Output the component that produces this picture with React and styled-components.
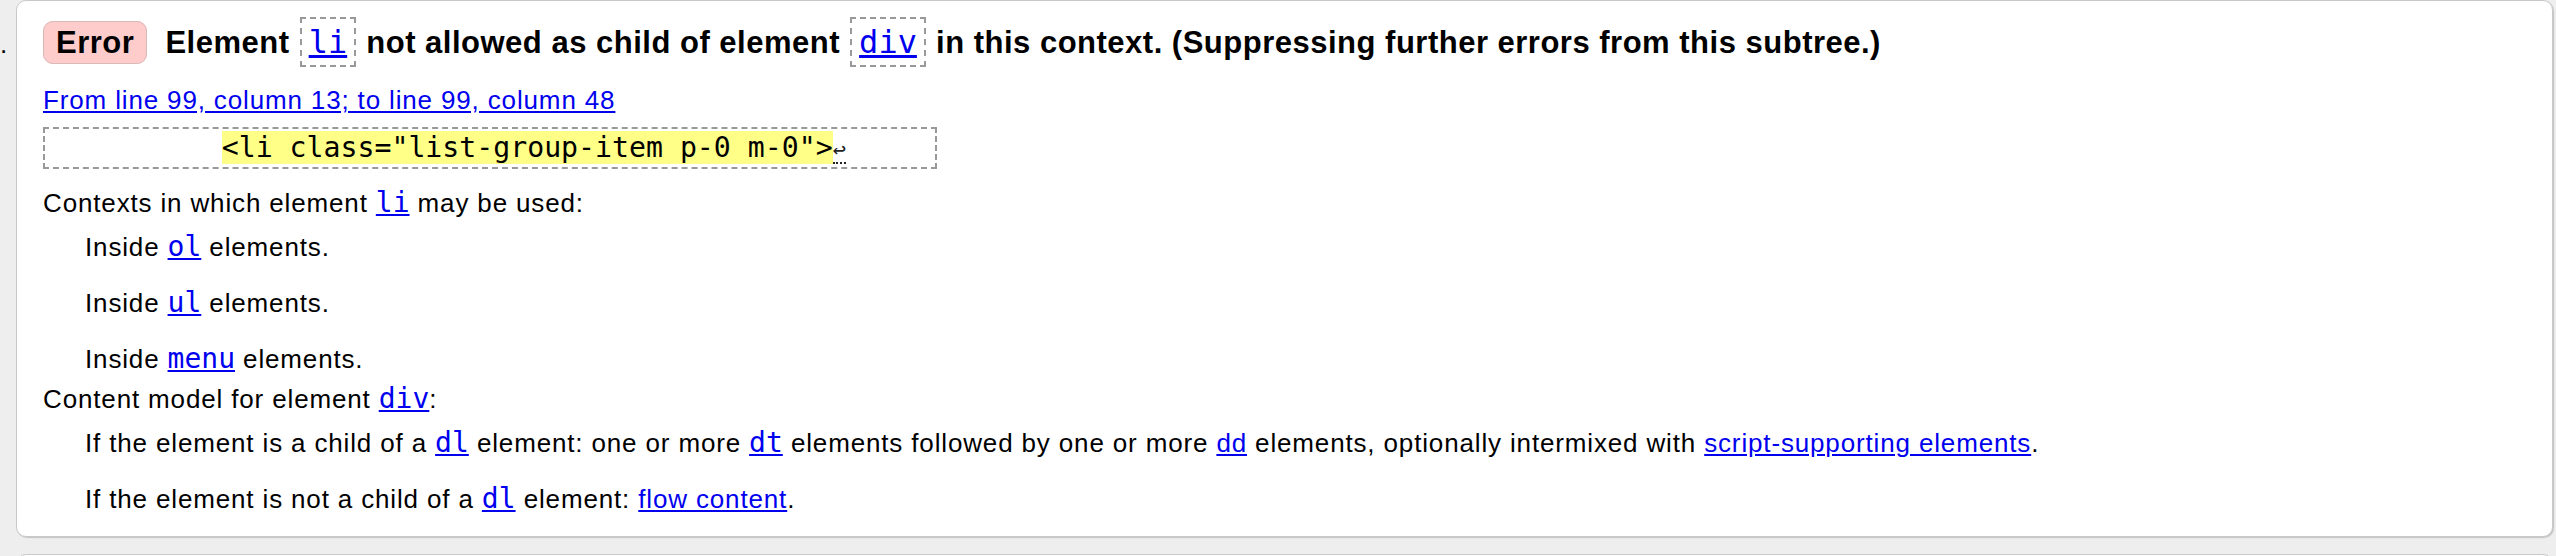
import React from 'react';
import styled, { createGlobalStyle, css } from 'styled-components';

const GlobalStyle = createGlobalStyle`
  html, body {
    margin: 0;
    padding: 0;
    overflow: hidden;
    background: #eee;
  }
  body {
    font-family: "Liberation Sans", Arial, Helvetica, sans-serif;
    font-size: 26px;
    line-height: 30px;
    letter-spacing: 0.85px;
    color: #000;
  }
`;

const List = styled.div`
  display: flex;
  flex-direction: column;
  gap: 17px;
  padding-right: 3px;
`;

const Item = styled.div`
  display: flex;
  align-items: baseline;
`;

const Marker = styled.span`
  flex: none;
  width: 16px;
  font-size: 26px;
`;

const Card = styled.div`
  flex: 1;
  min-width: 0;
  min-height: ${(p) => (p.$empty ? '160px' : 'auto')};
  background: #fff;
  border: 1px solid #c9c9c9;
  border-radius: 10px;
  box-shadow: 1px 1px 1px #c4c4c4;
  padding: 24px 26px 22px;
`;

const Message = styled.p`
  margin: 0 0 24px;
  font-size: 31px;
  line-height: 36px;
  font-weight: bold;
  letter-spacing: 0.5px;
  white-space: nowrap;
`;

const Badge = styled.strong`
  padding: 3px 12px;
  margin-right: 9px;
  background: #fcc;
  border: 1px solid #dcb9b9;
  border-radius: 10px;
`;

const Code = styled.code`
  font-family: "DejaVu Sans Mono", "Liberation Mono", monospace;
  font-weight: normal;
  font-size: ${(p) => p.$size || '28px'};
  line-height: 1;
  letter-spacing: 0;
  ${(p) =>
    p.$boxed &&
    css`
      padding: 4px 7px;
      margin: 0 1px;
      border: 2px dashed #999;
    `}
`;

const Link = styled.a`
  color: #00e;
  text-decoration: underline;
`;

const Location = styled.p`
  margin: 0;
`;

const Extract = styled.pre`
  box-sizing: border-box;
  width: 894px;
  margin: 12px 0 19px;
  padding: 2px 2px 2px 7px;
  border: 2px dashed #999;
  font-family: "DejaVu Sans Mono", "Liberation Mono", monospace;
  font-size: 28.2px;
  line-height: 34px;
  letter-spacing: 0;
  white-space: pre;
`;

const Highlight = styled.b`
  font-weight: normal;
  background: #ff8;
`;

const LineFeed = styled.span`
  font-size: 22px;
  line-height: 1;
  color: #222;
  border-bottom: 2px dotted #222;
`;

const Dl = styled.dl`
  margin: 0;
  & + & {
    margin-top: 10px;
  }
`;

const Dt = styled.dt`
  margin: 0;
`;

const Dd = styled.dd`
  margin: 14px 0 0 42px;
  & + & {
    margin-top: 26px;
  }
`;

const Tag = ({ children, size, boxed }) => (
  <Code $size={size} $boxed={boxed}>
    <Link href="#">{children}</Link>
  </Code>
);

const App = () => (
  <>
    <GlobalStyle />
    <List>
      <Item>
        <Marker>.</Marker>
        <Card>
          <Message>
            <Badge>Error</Badge> Element <Tag size="32px" boxed>li</Tag> not allowed as child of element{' '}
            <Tag size="32px" boxed>div</Tag> in this context. (Suppressing further errors from this subtree.)
          </Message>
          <Location>
            <Link href="#">From line 99, column 13; to line 99, column 48</Link>
          </Location>
          <Extract>
            {'          '}
            <Highlight>{'<li class="list-group-item p-0 m-0">'}</Highlight>
            <LineFeed title="Line break">↩</LineFeed>
          </Extract>
          <Dl>
            <Dt>
              Contexts in which element <Tag>li</Tag> may be used:
            </Dt>
            <Dd>
              Inside <Tag>ol</Tag> elements.
            </Dd>
            <Dd>
              Inside <Tag>ul</Tag> elements.
            </Dd>
            <Dd>
              Inside <Tag>menu</Tag> elements.
            </Dd>
          </Dl>
          <Dl>
            <Dt>
              Content model for element <Tag>div</Tag>:
            </Dt>
            <Dd>
              If the element is a child of a <Tag>dl</Tag> element: one or more <Tag>dt</Tag> elements followed by one or
              more <Link href="#">dd</Link> elements, optionally intermixed with{' '}
              <Link href="#">script-supporting elements</Link>.
            </Dd>
            <Dd>
              If the element is not a child of a <Tag>dl</Tag> element: <Link href="#">flow content</Link>.
            </Dd>
          </Dl>
        </Card>
      </Item>
      <Item>
        <Marker />
        <Card $empty />
      </Item>
    </List>
  </>
);

export default App;
